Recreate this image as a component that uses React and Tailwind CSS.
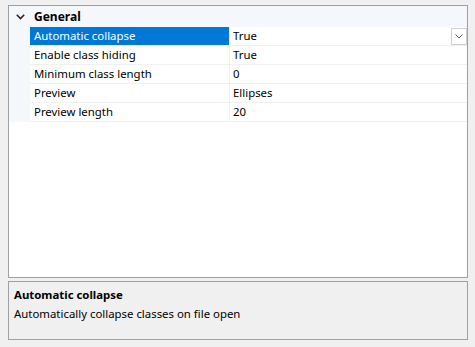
export default function App() {
  const rows = [
    ["Automatic collapse", "True"],
    ["Enable class hiding", "True"],
    ["Minimum class length", "0"],
    ["Preview", "Ellipses"],
    ["Preview length", "20"],
  ];

  return (
    <div
      className="w-[475px] h-[347px] bg-[#f0f0f0] pt-[5px] px-[8px] text-[11.4px] text-black"
      style={{ fontFamily: '"Segoe UI", "Noto Sans", sans-serif' }}
    >
      {/* property grid */}
      <div className="h-[273px] w-[460px] border border-[#a0a0a0] bg-white flex flex-col">
        <div className="h-[21px] flex items-center bg-[#f4f7fb]">
          <div className="w-[21px] flex justify-center pl-[1px]">
            <svg width="9" height="6" viewBox="0 0 9 6">
              <path d="M0.8 0.8 L4.5 4.6 L8.2 0.8" fill="none" stroke="#222" strokeWidth="1.5" />
            </svg>
          </div>
          <span className="pl-[4px] font-bold text-[12px] leading-none">General</span>
        </div>
        {rows.map(([name, value], i) => (
          <div key={name} className="h-[19px] flex">
            <div className="w-[21px] bg-[#f4f7fb]" />
            <div className="flex-1 flex border-b border-[#f0f0f0]">
              <div
                className={`w-[199px] pl-[4px] flex items-center ${
                  i === 0 ? "bg-[#0078d7] text-white" : ""
                }`}
              >
                {name}
              </div>
              <div className="w-px bg-[#f0f0f0]" />
              <div className="flex-1 pl-[3px] flex items-center justify-between">
                <span>{value}</span>
                {i === 0 && (
                  <div className="w-[16px] h-[17px] border border-[#cfcfcf] bg-white flex items-center justify-center">
                    <svg width="8" height="5" viewBox="0 0 8 5">
                      <path d="M0.5 0.5 L4 4 L7.5 0.5" fill="none" stroke="#555" strokeWidth="1" />
                    </svg>
                  </div>
                )}
              </div>
            </div>
          </div>
        ))}
      </div>

      {/* description */}
      <div className="mt-[3px] h-[59px] w-[460px] border border-[#a0a0a0] bg-[#f0f0f0] px-[5px] pt-[3px] leading-[19px]">
        <div className="font-bold">Automatic collapse</div>
        <div>Automatically collapse classes on file open</div>
      </div>
    </div>
  );
}
